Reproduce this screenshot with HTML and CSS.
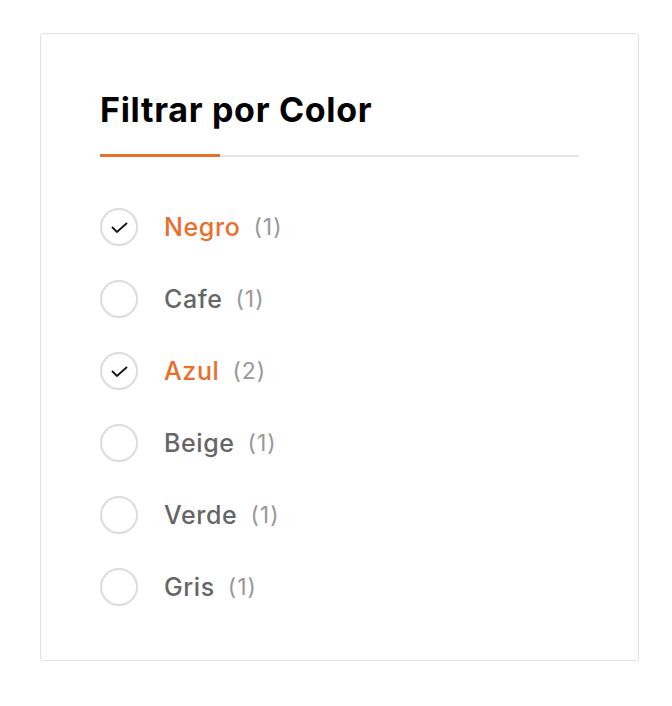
FILE: index.html
```html
<!DOCTYPE html>
<html lang="es">
<head>
  <meta charset="UTF-8">
  <meta name="viewport" content="width=device-width, initial-scale=1.0">
  <title>Filtrar por Color</title>
  <link rel="stylesheet" href="styles.css">
</head>
<body>

  <div class="filter-card">
    <h2 class="filter-title">Filtrar por Color</h2>
    <div class="title-rule">
      <span class="rule-accent"></span>
      <span class="rule-line"></span>
    </div>

    <ul class="color-list">
      <li class="color-item checked">
        <span class="check-circle">
          <svg viewBox="0 0 17 11" width="17" height="11"><path d="M1 5 L6 10 L16 1" fill="none" stroke="#111" stroke-width="1.8"/></svg>
        </span>
        <span class="color-name">Negro</span>
        <span class="color-count">(1)</span>
      </li>
      <li class="color-item">
        <span class="check-circle"></span>
        <span class="color-name">Cafe</span>
        <span class="color-count">(1)</span>
      </li>
      <li class="color-item checked">
        <span class="check-circle">
          <svg viewBox="0 0 17 11" width="17" height="11"><path d="M1 5 L6 10 L16 1" fill="none" stroke="#111" stroke-width="1.8"/></svg>
        </span>
        <span class="color-name">Azul</span>
        <span class="color-count">(2)</span>
      </li>
      <li class="color-item">
        <span class="check-circle"></span>
        <span class="color-name">Beige</span>
        <span class="color-count">(1)</span>
      </li>
      <li class="color-item">
        <span class="check-circle"></span>
        <span class="color-name">Verde</span>
        <span class="color-count">(1)</span>
      </li>
      <li class="color-item">
        <span class="check-circle"></span>
        <span class="color-name">Gris</span>
        <span class="color-count">(1)</span>
      </li>
    </ul>
  </div>

</body>
</html>
```

FILE: styles.css
```css
/* Page */
body {
  margin: 0;
  padding: 33px 0 0 40px;
  font-family: Inter, "Open Sans", sans-serif;
  background: #fff;
}

/* Card */
.filter-card {
  width: 599px;
  height: 628px;
  box-sizing: border-box;
  border: 1px solid #e2e2e2;
  border-radius: 3px;
  padding: 55px 59px 0 59px;
}

.filter-title {
  margin: 0;
  font-size: 34px;
  line-height: 42px;
  font-weight: 700;
  color: #000;
  letter-spacing: 0.7px;
}

/* Underline under the title */
.title-rule {
  display: flex;
  align-items: center;
  margin-top: 23px;
  height: 3px;
}

.rule-accent {
  width: 120px;
  height: 3px;
  background: #ea6f2b;
}

.rule-line {
  flex: 1;
  height: 2px;
  background: #e5e5e5;
}

/* List */
.color-list {
  list-style: none;
  margin: 51px 0 0 0;
  padding: 0;
  display: flex;
  flex-direction: column;
  gap: 34px;
}

.color-item {
  display: flex;
  align-items: center;
  height: 38px;
}

.check-circle {
  width: 38px;
  height: 38px;
  box-sizing: border-box;
  border: 2px solid #dcdcdc;
  border-radius: 50%;
  display: flex;
  justify-content: center;
  align-items: center;
  flex: 0 0 auto;
}

.check-circle svg {
  margin-top: 1px;
}

.color-name {
  margin-left: 26px;
  font-size: 25px;
  font-weight: 500;
  letter-spacing: 0.6px;
  color: #666;
}

.color-item.checked .color-name {
  color: #ea6f2b;
}

.color-count {
  margin-left: 13px;
  font-size: 23px;
  letter-spacing: 1px;
  color: #999;
}
```
